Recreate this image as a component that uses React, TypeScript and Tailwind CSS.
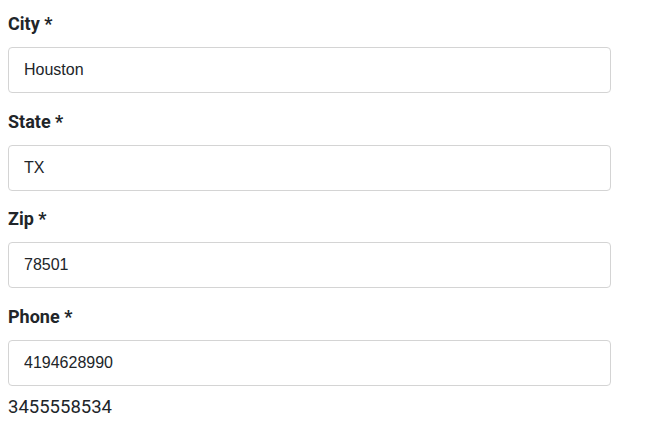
const fields = [
  { label: "City", value: "Houston" },
  { label: "State", value: "TX" },
  { label: "Zip", value: "78501" },
  { label: "Phone", value: "4194628990" },
];

const App = () => {
  return (
    <div className="min-h-screen bg-white pl-2 pt-[10px]">
      <div className="w-[603px]">
        <div className="flex flex-col gap-[14.67px]">
          {fields.map((f) => (
            <div key={f.label}>
              <label className="block mb-[10px] font-['Roboto',sans-serif] text-[18px] leading-[27px] font-bold text-[#212529]">
                {f.label} *
              </label>
              <input
                type="text"
                defaultValue={f.value}
                className="block w-full h-[46px] px-[15px] rounded-[4px] border border-[#d4d4d4] bg-white font-['Liberation_Sans',Arial,sans-serif] text-[16px] text-[#212529] outline-none"
              />
            </div>
          ))}
        </div>
        <p className="mt-[8px] font-['Roboto',sans-serif] text-[18.5px] leading-[27px] text-[#212529]">3455558534</p>
      </div>
    </div>
  );
};

export default App;
